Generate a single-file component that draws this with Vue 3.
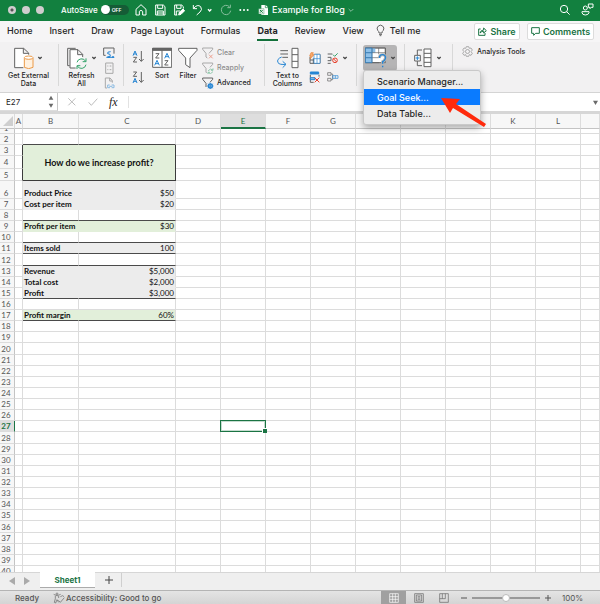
<script setup>
import { ref } from 'vue'

const tabs = ['Home', 'Insert', 'Draw', 'Page Layout', 'Formulas', 'Data', 'Review', 'View']
const activeTab = ref('Data')
const cellName = ref('E27')
const formula = ref('')
const autosave = ref(false)
const zoomLevel = ref(50)

const columns = ['A', 'B', 'C', 'D', 'E', 'F', 'G', 'H', 'I', 'J', 'K', 'L', '']
const freeColumns = columns.slice(3)

const entries = {
  6: { label: 'Product Price', value: '$50', fill: 'grey' },
  7: { label: 'Cost per item', value: '$20', fill: 'grey' },
  8: { ruled: true },
  9: { label: 'Profit per item', value: '$30', fill: 'green' },
  10: { ruled: true },
  11: { label: 'Items sold', value: '100', fill: 'grey', ruled: true },
  12: { ruled: true },
  13: { label: 'Revenue', value: '$5,000', fill: 'grey' },
  14: { label: 'Total cost', value: '$2,000', fill: 'grey' },
  15: { label: 'Profit', value: '$3,000', fill: 'grey', ruled: true },
  17: { label: 'Profit margin', value: '60%', fill: 'green', ruled: true },
}
const rows = Array.from({ length: 40 }, (_, i) => ({ n: i + 1, ...(entries[i + 1] || {}) }))

function rowClass(n) {
  if (n === 1) return 'row-cut'
  if (n === 4) return 'row-13'
  if (n === 6) return 'row-18'
  if (n === 5 || (n > 8 && n % 8 === 4)) return 'row-12'
  return 'row-11'
}
function cellClass(row) {
  return [row.fill, { ruled: row.ruled || row.n === 2 }]
}
</script>

<template>
  <div class="app">
    <header class="titlebar">
      <div class="lights">
        <button class="light first" aria-label="Close"></button>
        <button class="light" aria-label="Minimize"></button>
        <button class="light" aria-label="Full screen"></button>
      </div>
      <label class="autosave">
        <span>AutoSave</span>
        <span class="switch"><input v-model="autosave" type="checkbox"><i></i><b>OFF</b></span>
      </label>
      <div class="quick">
        <button aria-label="Home screen"><svg width="12" height="12" viewBox="407 11 36 36"><path d="M410 27 L425 13 L440 27 V44 H430 V33 Q425 27 420 33 V44 H410 Z" /></svg></button>
        <button aria-label="Save"><svg width="12" height="12" viewBox="462 11 36 36"><path d="M467 14 H490 L495 19 V44 H467 Z M473 14 V24 H488 V14 M472 44 V32 H490 V44 M472 38 H490" /></svg></button>
        <button aria-label="Save as"><svg width="12" height="12" viewBox="519 11 36 36"><path d="M532 44 H524 V14 H545 L550 19 V25 M530 14 V24 H543 V14 M529 44 V32 H540" /><path d="M536 44 L538 36 L549 26 L554 31 L543 42 Z" fill="#fff" /></svg></button>
        <button class="undo" aria-label="Undo"><svg width="22" height="12" viewBox="0 0 66 36"><path d="M4 3 V14 H15 M4 14 Q16 -1 26 8 Q32 17 24 24 L14 33" /><path class="thick" d="M48 16 L53 21 L58 16" /></svg></button>
        <button class="dim" aria-label="Redo"><svg width="12" height="12" viewBox="0 0 36 36"><path d="M28 8 A14 14 0 1 0 32 20 M31 2 V11 H22" /></svg></button>
        <button aria-label="More"><svg width="10" height="12" viewBox="0 0 30 36"><g fill="#fff" stroke="none"><circle cx="4" cy="18" r="3" /><circle cx="15" cy="18" r="3" /><circle cx="26" cy="18" r="3" /></g></svg></button>
      </div>
      <div class="doc">
        <svg width="11" height="12" viewBox="0 0 33 36"><path d="M10 3 H23 L30 10 V33 H10 Z" fill="#fff" stroke="none" /><path d="M22 3 V11 H30" stroke="#12803f" stroke-width="2" /><path d="M2 14 H18 V30 H2 Z" fill="#e8f3ec" stroke="#12803f" stroke-width="1" /><path d="M6 18 L14 26 M14 18 L6 26" stroke="#12803f" stroke-width="3" /></svg>
        <span>Example for Blog</span>
        <svg class="dim" width="6" height="6" viewBox="0 0 18 18"><path d="M2 6 L9 13 L16 6" /></svg>
      </div>
      <div class="corner">
        <button aria-label="Search"><svg width="12" height="12" viewBox="0 0 36 36"><circle cx="15" cy="15" r="11" /><path d="M23 23 L32 32" /></svg></button>
        <button aria-label="Presence"><svg width="13" height="13" viewBox="0 0 39 39"><path d="M22 3 H36 V13 H31 L27 17 V13 H22 Z" /><circle cx="13" cy="15" r="6" /><path d="M3 26 H24 V29 Q22 36 13 36 Q4 36 3 29 Z" /></svg></button>
      </div>
    </header>

    <nav class="tabs">
      <button v-for="tab in tabs" :key="tab" class="tab" :class="{ active: tab === activeTab }" @click="activeTab = tab">{{ tab }}</button>
      <button class="tell"><svg width="9" height="13" viewBox="0 0 27 39"><path d="M9 27 Q9 22 5 19 A10 10 0 1 1 22 19 Q18 22 18 27 Z M9 31 H18 M11 35 H16" /></svg>Tell me</button>
      <div class="actions">
        <button class="pill share"><svg width="9" height="9" viewBox="0 0 27 27"><path d="M8 6 H2 V25 H21 V18 M6 18 Q8 9 17 9 V3 L25 11 L17 18 V13 Q10 13 6 18 Z" /></svg>Share</button>
        <button class="pill"><svg width="9" height="9" viewBox="0 0 27 27"><path d="M2 2 H25 V19 H14 L8 25 V19 H2 Z" /></svg>Comments</button>
      </div>
    </nav>

    <section class="ribbon">
      <div class="group external">
        <button class="big">
          <span class="icon"><svg width="20" height="22" viewBox="48 140 60 66"><path d="M76 202 H50 V144 H77 L92 158 V163 M76 144 V159 H92" fill="#fff" /><path d="M79 173 V201 Q92 209 105 201 V173" fill="#fff1e0" stroke="#eb9a48" /><ellipse cx="92" cy="172" rx="13" ry="5" fill="#fff" stroke="#eb9a48" /></svg><svg class="chev" width="6" height="6" viewBox="0 0 18 18"><path d="M4 6 L9 11 L14 6" /></svg></span>
          <span>Get External<br>Data</span>
        </button>
      </div>
      <div class="group refresh">
        <button class="big">
          <span class="icon"><svg width="21" height="22" viewBox="210 140 63 66"><path d="M218 196 H212 V144 H236" /><path d="M236 203 H219 V148 H243 L257 162 V170 M242 148 V163 H257" fill="#fff" /><path d="M240 186 A14 14 0 0 1 266 183 M267 174 V184 H257 M267 193 A14 14 0 0 1 241 197 M240 206 V196 H250" stroke="#35a36b" /></svg><svg class="chev" width="6" height="6" viewBox="0 0 18 18"><path d="M4 6 L9 11 L14 6" /></svg></span>
          <span>Refresh<br>All</span>
        </button>
        <div class="stack">
          <button aria-label="Queries and connections"><svg width="12" height="12" viewBox="306 140 36 36"><path d="M314 165 H308 V143 H339 V160" /><path d="M316 171 H340 M329 154 Q317 154 320 160 Q330 160 328 168 Q325 172 318 170" stroke="#2585d3" /><circle cx="324" cy="170" r="3" fill="#2585d3" stroke="none" /><circle cx="336" cy="170" r="3" fill="#2585d3" stroke="none" /></svg></button>
          <button class="faded" aria-label="Properties"><svg width="12" height="12" viewBox="306 182 36 36"><path d="M314 185 H336 V216 H314 Z M319 194 H322 M326 194 H331 M319 205 H322 M326 205 H331" /></svg></button>
          <button class="faded" aria-label="Edit links"><svg width="12" height="12" viewBox="306 229 36 36"><path d="M318 262 H313 V232 H327 L334 240 V246 M326 232 V241 H334" /><path d="M326 253 H320 V261 H327 M332 253 H339 V261 H332 M325 257 H334" stroke="#2585d3" /></svg></button>
        </div>
      </div>
      <div class="group sorting">
        <div class="stack az">
          <button aria-label="Sort ascending"><svg width="13" height="13" viewBox="0 0 39 39"><path class="blue" d="M3 17 L9 3 L15 17 M5 12 H13" /><path d="M4 22 H14 L4 36 H15 M28 3 V34 M21 27 L28 34 L35 27" /></svg></button>
          <button aria-label="Sort descending"><svg width="13" height="13" viewBox="0 0 39 39"><path d="M4 3 H14 L4 16 H15 M28 3 V34 M21 27 L28 34 L35 27" /><path class="blue" d="M3 36 L9 22 L15 36 M5 31 H13" /></svg></button>
        </div>
        <button class="big sort">
          <span class="icon"><svg width="20" height="22" viewBox="452 140 60 66"><path d="M454 144 H511 V201 H454 Z" fill="#fff" /><path d="M454 144 H511 V150 H454 Z" fill="#666" /><path d="M482 150 V201 M463 160 H473 L463 173 H474 M490 181 H500 L490 194 H501" /><path class="blue" d="M460 195 L467 180 L474 195 M463 190 H471 M490 174 L497 159 L504 174 M493 169 H501" /></svg></span>
          <span>Sort</span>
        </button>
        <button class="big filter">
          <span class="icon"><svg width="20" height="22" viewBox="530 140 60 66"><path d="M532 144 H587 V150 L566 173 V202 L553 193 V173 L532 150 Z" fill="#fff" /></svg></span>
          <span>Filter</span>
        </button>
        <div class="lines">
          <button class="faded"><svg width="12" height="12" viewBox="8 138 36 36"><path d="M10 141 H40 V145 L29 157 M24 171 L20 168 V157 L10 145 V141" /><path d="M29 161 L40 172 M40 161 L29 172" stroke="#e8502f" /></svg>Clear</button>
          <button class="faded"><svg width="12" height="12" viewBox="8 138 36 36"><path d="M10 141 H40 V145 L32 154 M22 171 L20 168 V157 L10 145 V141" /><path d="M26 165 Q33 155 41 162 M41 157 V163 H35 M41 167 Q34 177 26 170 M26 175 V169 H32" stroke="#35a36b" /></svg>Reapply</button>
          <button><svg width="12" height="12" viewBox="8 138 36 36"><path d="M10 141 H40 V145 L32 154 M20 168 V157 L10 145 V141" /><circle cx="33" cy="165" r="6" stroke="#2585d3" stroke-width="4" /><path d="M33 155 V175 M23 165 H43 M26 158 L40 172 M40 158 L26 172" stroke="#2585d3" stroke-width="2" /></svg>Advanced</button>
        </div>
      </div>
      <div class="group data-tools">
        <button class="big columns">
          <span class="icon"><svg width="22" height="22" viewBox="230 140 66 66"><path d="M240 151 H263 M240 161 H263 M246 171 H263" /><path d="M275 144 H293 V202 H275 Z M275 163 H293 M275 183 H293" fill="#fff" /><path d="M244 170 Q228 176 233 187 Q238 194 256 192 M247 183 L257 192 L247 202" stroke="#2585d3" /></svg></span>
          <span>Text to<br>Columns</span>
        </button>
        <div class="tools">
          <button aria-label="Flash fill"><svg width="12" height="12" viewBox="327 156 36 36"><path d="M330 170 V190 H360 V163 H344 M340 175 V190 M330 180 H342" /><path d="M342 163 H360 V190 H342 Z M351 163 V190 M342 176 H360" fill="#fff" stroke="#2585d3" stroke-width="2" /><path d="M333 158 H340 L337 164 H342 L330 177 L333 168 H329 Z" fill="#f5ac72" stroke="#e88032" stroke-width="2" /></svg></button>
          <button class="wide" aria-label="Data validation"><svg width="12" height="12" viewBox="380 156 36 36"><path d="M382 162 H396 M382 172 H392 V182 H382 M382 190 H391" /><path d="M398 164 L403 169 L412 160" stroke="#35a36b" /><circle cx="404" cy="181" r="7" stroke="#e8402b" /><path d="M399 176 L409 186" stroke="#e8402b" /></svg><svg class="chev" width="6" height="6" viewBox="0 0 18 18"><path d="M4 6 L9 11 L14 6" /></svg></button>
          <button aria-label="Remove duplicates"><svg width="12" height="12" viewBox="327 214 36 36"><path d="M331 225 V248 H341 M357 225 V231 M331 237 H345" /><path d="M331 217 H356 V223 H331 Z" fill="#2585d3" stroke="#2585d3" /><path d="M331 234 H345 V240 H331 Z" fill="#8dc0e9" stroke="#2585d3" /><path d="M344 234 L358 248 M358 234 L344 248" stroke="#e8402b" /></svg></button>
          <button aria-label="Consolidate"><svg width="12" height="12" viewBox="380 214 36 36"><path d="M382 219 H392 V227 H382 Z M382 236 H392 V244 H382 Z M392 223 H397 V240 H392" stroke-width="2" /><path d="M397 228 H413 V236 H397 Z M405 228 V236" stroke="#2585d3" stroke-width="2" /></svg></button>
        </div>
      </div>
      <div class="group analysis">
        <button class="whatif" aria-label="What-if analysis">
          <svg width="22" height="22" viewBox="48 28 66 66"><path d="M49 31 H109 V75 H49 Z" fill="#fff" /><path d="M49 31 H79 V45 H69 V75 H49 Z" fill="#8dc0e9" stroke="none" /><path d="M49 31 H109 V50 M49 31 V75 H90 M49 45 H109 M49 60 H89 M69 31 V75 M89 31 V50" stroke-width="2" /><path d="M49 31 H69 V75 H49 Z M49 45 H69 M49 60 H69" stroke="#2585d3" stroke-width="2" /><path d="M91 61 Q92 50 102 51 Q112 54 109 63 Q106 70 101 72 V78 M101 84 V89" stroke="#b5b4b5" stroke-width="9" /><path d="M91 61 Q92 50 102 51 Q112 54 109 63 Q106 70 101 72 V78 M101 84 V89" stroke="#2585d3" stroke-width="4" /></svg>
          <svg class="chev" width="6" height="6" viewBox="0 0 18 18"><path d="M4 6 L9 11 L14 6" /></svg>
        </button>
        <div class="menu" role="menu">
          <button role="menuitem">Scenario Manager...</button>
          <button role="menuitem" class="chosen">Goal Seek...</button>
          <button role="menuitem">Data Table...</button>
        </div>
        <svg class="pointer" width="48" height="34" viewBox="0 0 48 34"><path d="M1 2 L20 3 L16 8 L46 28 L44 31 L13 12 L10 17 Z" /></svg>
      </div>
      <div class="group outline">
        <button class="whatif plain" aria-label="Group">
          <svg width="18" height="20" viewBox="46 142 54 60"><path d="M76 145 H97 V198 H76 Z M76 158 H97 M76 171 H97 M76 185 H97" fill="#fff" /><path d="M70 148 H56 V163 M56 181 V195 H70" /><path d="M48 164 H65 V181 H48 Z" fill="#fff" /><path d="M56 167 V178 M51 172 H62" stroke="#2585d3" /></svg>
          <svg class="chev" width="6" height="6" viewBox="0 0 18 18"><path d="M4 6 L9 11 L14 6" /></svg>
        </button>
      </div>
      <div class="group addins">
        <button><svg width="11" height="11" viewBox="0 0 33 33"><path d="M13 2 H20 L22 7 L27 6 L31 12 L27 17 L31 22 L27 28 L22 26 L20 31 H13 L11 26 L6 28 L2 22 L6 17 L2 12 L6 6 L11 7 Z" /><circle cx="16.500" cy="16.500" r="6" /></svg>Analysis Tools</button>
      </div>
    </section>

    <section class="formula">
      <div class="namebox">
        <input v-model="cellName" aria-label="Name box">
        <button aria-label="Step cell"><svg width="6" height="13" viewBox="0 0 18 39"><path d="M9 2 L16 14 H2 Z M2 26 H16 L9 38 Z" /></svg></button>
      </div>
      <button class="fbtn" aria-label="Cancel"><svg width="10" height="10" viewBox="0 0 30 30"><path d="M4 4 L25 25 M25 4 L4 25" /></svg></button>
      <button class="fbtn" aria-label="Enter"><svg width="10" height="10" viewBox="0 0 30 30"><path d="M2 16 L10 25 L28 5" /></svg></button>
      <button class="fx">fx</button>
      <input v-model="formula" class="entry" aria-label="Formula">
      <button class="expand" aria-label="Expand formula bar"><svg width="5" height="5" viewBox="0 0 6 6"><path d="M0 1 H6 L3 6 Z" /></svg></button>
    </section>

    <main class="sheet">
      <table>
        <colgroup>
          <col class="c-head"><col class="c-a"><col class="c-b"><col class="c-c">
          <col v-for="i in 9" :key="i" class="c-std"><col>
        </colgroup>
        <thead>
          <tr>
            <th class="corner-cell"><svg width="10" height="10" viewBox="0 0 10 10"><path d="M10 0 V10 H0 Z" /></svg></th>
            <th v-for="(c, i) in columns" :key="i" :class="{ sel: c === 'E' }">{{ c }}</th>
          </tr>
        </thead>
        <tbody>
          <tr v-for="row in rows" :key="row.n" :class="rowClass(row.n)">
            <th :class="{ sel: row.n === 27 }"><span>{{ row.n }}</span></th>
            <td :class="{ edge: row.n > 2 && row.n < 6 }"></td>
            <td v-if="row.n === 3" class="question" colspan="2" rowspan="3">How do we increase profit?</td>
            <template v-if="row.n < 3 || row.n > 5">
              <td class="label" :class="cellClass(row)">{{ row.label }}</td>
              <td class="value" :class="cellClass(row)">{{ row.value }}</td>
            </template>
            <td v-for="(c, i) in freeColumns" :key="i" :class="{ cursor: c === 'E' && row.n === 27 }"></td>
          </tr>
        </tbody>
      </table>
    </main>

    <footer class="sheets">
      <button class="nav" aria-label="Previous sheet"><svg width="6" height="8" viewBox="0 0 6 8"><path d="M6 0 V8 L0 4 Z" /></svg></button>
      <button class="nav" aria-label="Next sheet"><svg width="6" height="8" viewBox="0 0 6 8"><path d="M0 0 V8 L6 4 Z" /></svg></button>
      <button class="sheet-tab">Sheet1</button>
      <button class="add" aria-label="Add sheet"><svg width="8" height="8" viewBox="0 0 8 8"><path d="M4 0 V8 M0 4 H8" /></svg></button>
    </footer>

    <footer class="status">
      <span class="ready">Ready</span>
      <button class="access"><svg width="12" height="12" viewBox="0 0 36 36"><circle cx="12" cy="6" r="3" /><path d="M2 7 Q12 16 23 7 M7 12 V20 L4 31 L8 33 L12 23 L17 31 M17 12 V18 M16 25 L22 31 L34 17 M22 14 Q30 8 33 14" /></svg>Accessibility: Good to go</button>
      <div class="views">
        <button class="view on" aria-label="Normal view"><svg width="10" height="10" viewBox="0 0 30 30"><path d="M2 2 H28 V28 H2 Z M2 11 H28 M2 19 H28 M11 2 V28 M19 2 V28" /></svg></button>
        <button class="view" aria-label="Page layout view"><svg width="10" height="10" viewBox="0 0 30 30"><path d="M2 2 H28 V28 H2 Z M7 6 H23 V24 H7 Z M11 11 H19 M11 15 H19 M11 19 H19" /></svg></button>
        <button class="view" aria-label="Page break view"><svg width="10" height="10" viewBox="0 0 30 30"><path d="M2 2 H28 V28 H2 Z M2 17 H19 V2 M10 2 V17" /></svg></button>
      </div>
      <div class="zoom">
        <button aria-label="Zoom out"><svg width="6" height="8" viewBox="0 0 6 8"><path d="M0 4 H6" /></svg></button>
        <input v-model="zoomLevel" type="range" min="0" max="100" aria-label="Zoom">
        <button aria-label="Zoom in"><svg width="6" height="8" viewBox="0 0 6 8"><path d="M0 4 H6 M3 1 V7" /></svg></button>
        <span>100%</span>
      </div>
    </footer>
  </div>
</template>

<style>
body { margin: 0; }
</style>

<style scoped>
.app {
  display: flex;
  flex-direction: column;
  height: 100vh;
  overflow: hidden;
  background: #f1f1f1;
  color: #262626;
  font-family: Inter, "Liberation Sans", sans-serif;
  font-size: 8px;
}
*, *::before, *::after { box-sizing: border-box; }
button, input {
  margin: 0;
  padding: 0;
  border: 0;
  background: none;
  color: inherit;
  font: inherit;
}
svg { display: block; flex: none; fill: none; stroke: #626262; stroke-width: 3; }
svg .blue { stroke: #2585d3; }
.chev { stroke: #444; stroke-width: 4; }
.faded { opacity: 0.5; }

.titlebar {
  display: flex;
  align-items: center;
  flex: none;
  height: 21px;
  padding: 0 6px 2px 8px;
  background: #12803f;
  color: #fff;
}
.titlebar svg { stroke: #fff; }
.titlebar .dim { opacity: 0.5; }
.lights { display: flex; gap: 6px; width: 53px; }
.light { width: 8px; height: 8px; border-radius: 50%; background: #cfcdce; }
.light.first { background: radial-gradient(circle, #555 1px, #cfcdce 2px); }
.autosave { display: flex; align-items: center; gap: 3px; width: 74px; font-weight: 500; }
.switch {
  display: flex;
  align-items: center;
  gap: 2px;
  width: 28px;
  height: 10px;
  border-radius: 5px;
  background: #155c36;
}
.switch input { position: absolute; opacity: 0; }
.switch i { width: 9px; height: 9px; border-radius: 50%; background: #fff; }
.switch b { font-size: 5px; font-weight: 600; }
.quick { display: flex; align-items: center; gap: 7px; }
.quick .undo { margin-right: -1px; }
.quick .thick { stroke-width: 4; }
.doc { display: flex; align-items: center; gap: 3px; margin-left: 9px; font-size: 9px; font-weight: 500; white-space: nowrap; }
.corner { display: flex; gap: 10px; margin-left: auto; }

.tabs {
  display: flex;
  align-items: stretch;
  flex: none;
  gap: 17px;
  height: 21px;
  padding-left: 7px;
  background: #f6f5f6;
  font-size: 9px;
  font-weight: 500;
}
.tab { height: 20px; padding: 1px 0; border-bottom: 2px solid transparent; white-space: nowrap; }
.tab.active { border-color: #12703a; font-weight: 700; }
.tell { display: flex; align-items: center; gap: 5px; height: 19px; margin-left: -5px; white-space: nowrap; }
.actions { display: flex; gap: 7px; margin-left: auto; padding: 2px 6px 2px 0; }
.pill {
  display: flex;
  align-items: center;
  justify-content: center;
  gap: 3px;
  width: 67px;
  border: 1px solid #dcdcdc;
  border-radius: 2px;
  background: #fff;
  color: #1b7444;
  font-weight: 600;
}
.pill.share { width: 46px; }
.pill svg { stroke: #1b7444; }

.ribbon { display: flex; flex: none; height: 51px; padding: 2px 0 6px; background: #f2f1f2; border-bottom: 1px solid #d4d4d4; font-size: 7px; font-weight: 500; }
.group { display: flex; flex: none; border-right: 1px solid #d8d8d8; }
.big { display: flex; flex-direction: column; align-items: center; gap: 3px; padding-top: 3px; line-height: 8px; white-space: nowrap; }
.icon { display: flex; align-items: center; gap: 3px; height: 22px; }
.external { width: 59px; }
.external .big { width: 57px; }
.refresh { width: 65px; }
.refresh .big { width: 45px; margin-right: -1px; }
.stack { display: flex; flex-direction: column; gap: 3px; padding-top: 3px; }
.sorting { width: 141px; }
.az { gap: 8px; width: 26px; padding-left: 8px; padding-top: 6px; }
.sort { width: 24px; }
.filter { width: 28px; }
.lines { display: flex; flex-direction: column; gap: 3px; }
.lines { padding-top: 3px; font-size: 7px; line-height: 12px; }
.lines button { display: flex; align-items: center; gap: 3px; }
.data-tools { width: 92px; }
.columns { width: 45px; }
.tools { display: grid; grid-template-columns: 18px 22px; grid-template-rows: 12px 12px; gap: 7px 0; padding: 8px 0 0 0; margin-left: -1px; }
.tools .wide { display: flex; align-items: center; gap: 3px; }
.analysis { position: relative; width: 48px; }
.whatif { display: flex; align-items: center; justify-content: center; gap: 3px; width: 34px; height: 26px; margin: 1px 0 0 6px; border-radius: 3px; background: #b5b4b5; }
.whatif.plain { background: none; width: 34px; gap: 4px; }
.outline { width: 48px; }
.addins { border: 0; align-items: flex-start; padding: 2px 0 0 9px; }
.addins button { display: flex; align-items: center; gap: 4px; font-size: 7px; white-space: nowrap; }
.addins svg { stroke: #8a8a8a; stroke-width: 2; }
.menu {
  position: absolute;
  z-index: 2;
  left: 6px;
  top: 26px;
  width: 118px;
  padding: 2px 0 3px;
  border: 1px solid #c9c9c9;
  border-radius: 3px;
  background: #ececec;
  box-shadow: 0 3px 7px rgba(0, 0, 0, 0.3);
}
.menu button { display: block; width: 100%; height: 16px; padding-left: 13px; text-align: left; font-size: 9px; font-weight: 500; }
.menu .chosen { background: #0a7bff; color: #fff; }
.pointer { position: absolute; z-index: 3; left: 83px; top: 52px; fill: #ff2a0c; stroke: none; }

.formula { display: flex; align-items: center; flex: none; height: 21px; background: #fff; border-bottom: 3px solid #d6d6d6; }
.namebox { display: flex; align-items: center; width: 58px; height: 18px; padding: 0 3px 0 6px; border-right: 1px solid #c6c6c6; border-bottom: 1px solid #ddd; }
.namebox input { flex: 1; min-width: 0; font-size: 8px; }
.namebox svg, .expand svg, .nav svg { fill: #6a6a6a; stroke: none; }
.fbtn { width: 10px; margin-left: 9px; }
.fbtn svg { stroke: #bcbcbc; }
.fbtn + .fbtn { margin-left: 11px; }
.fx { width: 22px; margin-left: 9px; padding-left: 2px; border-right: 1px solid #e2e2e2; font: italic 12px/12px "Liberation Serif", serif; text-align: left; }
.entry { flex: 1; min-width: 0; height: 14px; }
.expand { padding-right: 2px; }

.sheet { flex: 1; min-height: 0; overflow: hidden; background: #fff; }
table { width: 100%; table-layout: fixed; border-collapse: separate; border-spacing: 0; font-family: Lato, "Liberation Sans", sans-serif; }
th, td { padding: 0; border-right: 1px solid #dcdcdc; border-bottom: 1px solid #dcdcdc; font-size: 8px; line-height: 10px; overflow: hidden; white-space: nowrap; }
th { background: #f7f7f7; color: #555; font-weight: 400; text-align: center; }
thead th { height: 15px; border-bottom-color: #c4c4c4; }
.c-head { width: 15px; }
.c-a { width: 8px; }
.c-b { width: 56px; }
.c-c { width: 97px; }
.c-std { width: 45px; }
.corner-cell svg { margin-left: 3px; fill: #cfcfcf; stroke: none; }
tbody th { padding-right: 2px; border-right-color: #c4c4c4; }
th.sel { background: #dedede; color: #1b7444; }
thead th.sel { border-bottom: 2px solid #1b7444; }
tbody th.sel { border-right: 1px solid #1b7444; font-weight: 700; }
.row-cut { height: 5px; }
.row-cut th span { display: flex; align-items: flex-end; justify-content: center; height: 4px; overflow: hidden; }
.row-cut td { line-height: 4px; }
.row-11 { height: 11px; }
.row-12 { height: 12px; }
.row-13 { height: 13px; }
.row-18 { height: 18px; }
.row-18 > * { vertical-align: bottom; }
.label { padding-left: 1px; color: #111; font-weight: 700; }
.value { padding-right: 1px; color: #111; text-align: right; }
.grey { background: #ececec; border-color: #ececec; }
.green { background: #e2efda; border-color: #e2efda; }
.value.grey, .value.green { border-right-color: #dcdcdc; }
.label.ruled, .value.ruled { border-bottom-color: #4a4a4a; }
.edge { border-right-color: #3c3c3c; }
.question { border-color: #3c3c3c; background: #e2efda; color: #111; font-size: 9px; font-weight: 700; text-align: center; }
.cursor { position: relative; overflow: visible; }
.cursor::before { content: ""; position: absolute; inset: -1px -1px -1px -1px; border: 1px solid #1b7444; box-shadow: inset 0 0 0 1px rgba(27, 116, 68, 0.25); }
.cursor::after { content: ""; position: absolute; right: -2px; bottom: -2px; width: 4px; height: 4px; background: #1b7444; border: solid #fff; border-width: 1px 0 0 1px; box-sizing: content-box; }

.sheets { display: flex; align-items: flex-start; flex: none; height: 18px; border-top: 1px solid #d6d6d6; background: #efefef; }
.nav { width: 6px; margin: 4px 0 0 9px; }
.nav svg { fill: #aaa; }
.sheet-tab { width: 55px; height: 16px; margin: -1px 0 0 10px; background: #fff; border-bottom: 1px solid #ababab; color: #1b7444; font-weight: 700; }
.add { width: 27px; height: 14px; padding-left: 10px; border-right: 1px solid #cfcfcf; }
.add svg { stroke: #444; stroke-width: 1; }

.status { display: flex; align-items: stretch; flex: none; height: 14px; border-top: 1px solid #b4b4b4; background: linear-gradient(#e4e4e4, #d4d4d4); color: #555; line-height: 14px; white-space: nowrap; }
.ready { width: 53px; padding-left: 15px; }
.access { display: flex; align-items: center; gap: 1px; font-weight: 500; }
.ready { font-weight: 500; }
.access svg { stroke-width: 2; }
.views { display: flex; margin-left: auto; }
.view { display: grid; place-items: center; width: 25px; }
.view svg { stroke-width: 2; }
.view.on { background: #a0a0a0; }
.view.on svg { stroke: #fff; }
.zoom { display: flex; align-items: center; gap: 5px; padding-left: 5px; }
.zoom svg { stroke: #555; stroke-width: 1; }
.zoom span { width: 44px; padding-left: 6px; }
.zoom input { width: 68px; height: 10px; appearance: none; background: linear-gradient(#999, #999) center / 100% 2px no-repeat; }
.zoom input::-webkit-slider-thumb { appearance: none; width: 8px; height: 8px; border: 1px solid #bbb; border-radius: 50%; background: #fff; }
</style>
